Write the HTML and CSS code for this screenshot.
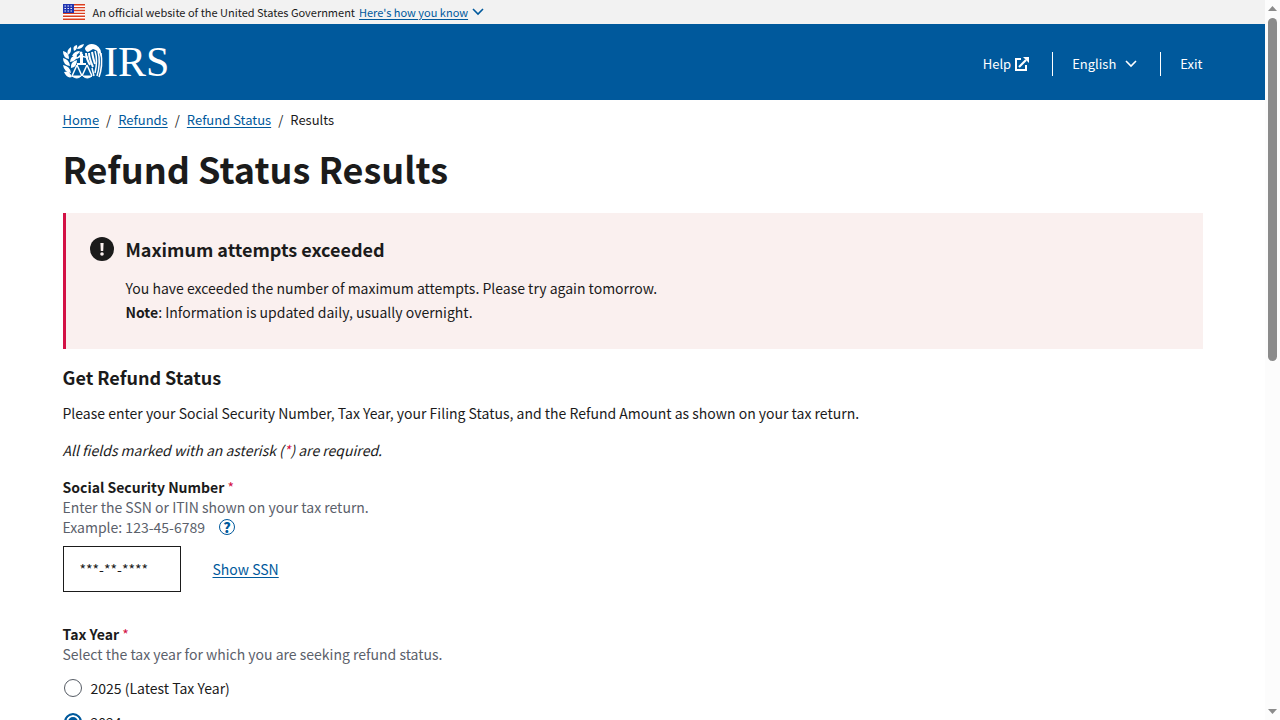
FILE: index.html
```html
<!DOCTYPE html>
<html lang="en">

<head>
    <meta charset="UTF-8">
    <meta name="viewport" content="width=device-width, initial-scale=1.0">
    <title>Refund Status Results</title>
    <link rel="stylesheet" href="styles.css">
</head>

<body>
    <div class="page">
        <div class="gov-banner">
            <div class="container gov-content">
                <svg class="flag" viewBox="0 0 22 16" aria-hidden="true">
                    <rect width="22" height="16" fill="#fff" />
                    <path d="M0 .7h22M0 3.600h22M0 6.500h22M0 9.400h22M0 12.300h22M0 15.300h22" stroke="#db3e1f" stroke-width="1.4" />
                    <rect width="11" height="9" fill="#1e33b1" />
                    <path d="M1.500 2h9M1.500 4.500h9M1.500 7h9" stroke="#fff" stroke-width="1.2" stroke-dasharray="1.4 1.6" />
                </svg>
                <span>An official website of the United States Government</span>
                <button class="banner-btn" type="button"><span>Here's how you know</span>
                    <svg class="chevron" viewBox="0 0 12 8" aria-hidden="true"><path d="M1 1l5 5 5-5" stroke-width="1.6" /></svg>
                </button>
            </div>
        </div>

        <header class="header">
            <div class="container header-content">
                <a class="logo" href="#" aria-label="IRS home">
                    <svg viewBox="0 -7 110 50" aria-hidden="true">
                        <g fill="#fff">
                            <!-- olive branch -->
                            <path d="M0 7q6 1 6 8Q0 14 0 7zM0 14q6 1 7 8Q0 21 0 14zM0 21q7 1 8 8Q1 28 0 21zM1 28q6-1 8 5Q4 35 1 28z" />
                            <path d="M5 11Q3 6 8 3q1 5-3 8zM11 7Q9 2 14 1q1 4-3 6zM14 5q1-4 7-5-1 5-7 5zM9 12q2-5 8-5-2 5-8 5zM7 18q0-6 7-7 0 6-7 7zM8 24q-1-6 6-8 0 7-6 8z" />
                            <!-- eagle head -->
                            <path d="M22 4q4-6 11-3 6 3 5 12-2-7-8-8l-5 3q-3-1-3-4z" />
                            <circle cx="18" cy="9" r="1.500" />
                            <path d="M17 10h3v10h-3zM14 19h9v2h-9z" />
                        </g>
                        <g fill="none" stroke="#fff" stroke-width="1.500">
                            <!-- scales -->
                            <path d="M12 14q4 0 6-3 3 3 7 2M14 21L9 32M14 21l5 11M24 21l-5 11M24 21l5 11" />
                            <path d="M9 32h9q-4 4-9 0zM20 32h9q-5 4-9 0z" fill="#fff" stroke-width="1" />
                            <!-- wing -->
                            <path d="M23 9q0 5 4 12M26 9q0 5 4 14M29 8q1 6 3 12" stroke-width="2" />
                            <path d="M32 7q3 9 0 22M35 7q3 12-1 25M38 9q2 13-2 24M29 24l2 8" />
                        </g>
                        <text class="logo-text" x="41" y="32">IRS</text>
                    </svg>
                </a>
                <nav class="nav">
                    <a class="nav-item" href="#">Help
                        <svg class="external" viewBox="0 0 14 14" aria-hidden="true">
                            <path d="M6 2H1v11h10V8" fill="none" stroke="#fff" stroke-width="2" />
                            <path d="M4 10l7-7" stroke="#fff" stroke-width="2.2" />
                            <path d="M8 0h6v6z" fill="#fff" />
                        </svg>
                    </a>
                    <button class="nav-item" type="button">English
                        <svg class="chevron" viewBox="0 0 12 8" aria-hidden="true"><path d="M1 1l5 5 5-5" stroke-width="1.6" /></svg>
                    </button>
                    <a class="nav-item" href="#">Exit</a>
                </nav>
            </div>
        </header>

        <main class="container">
            <nav class="breadcrumb" aria-label="Breadcrumb">
                <a href="#">Home</a><span>/</span><a href="#">Refunds</a><span>/</span><a href="#">Refund Status</a><span>/</span>Results
            </nav>

            <h1 class="title">Refund Status Results</h1>

            <div class="alert" role="alert">
                <svg class="alert-icon" viewBox="0 0 24 24" aria-hidden="true">
                    <circle cx="12" cy="12" r="12" fill="#1b1b1b" />
                    <path d="M10.400 6h3.200l-.4 8h-2.400z" fill="#faf0ef" />
                    <circle cx="12" cy="17" r="1.800" fill="#faf0ef" />
                </svg>
                <div>
                    <h2 class="sub-title">Maximum attempts exceeded</h2>
                    <p>You have exceeded the number of maximum attempts. Please try again tomorrow.</p>
                    <p><strong>Note</strong>: Information is updated daily, usually overnight.</p>
                </div>
            </div>

            <h2 class="sub-title">Get Refund Status</h2>
            <p class="intro">Please enter your Social Security Number, Tax Year, your Filing Status, and the Refund Amount as shown on your tax return.</p>
            <p class="intro"><em>All fields marked with an asterisk (<span class="required">*</span>) are required.</em></p>

            <form class="refund-form">
                <div class="field">
                    <label class="label" for="ssn">Social Security Number <span class="required">*</span></label>
                    <div class="hint">Enter the SSN or ITIN shown on your tax return.</div>
                    <div class="hint example">Example: 123-45-6789
                        <button class="help-btn" type="button" aria-label="SSN help">?</button>
                    </div>
                    <div class="ssn-row">
                        <input class="ssn-input" type="text" id="ssn" value="***-**-****">
                        <a href="#">Show SSN</a>
                    </div>
                </div>

                <fieldset class="field">
                    <legend class="label">Tax Year <span class="required">*</span></legend>
                    <div class="hint">Select the tax year for which you are seeking refund status.</div>
                    <div class="radio-row">
                        <input class="radio" type="radio" name="year" id="year2025">
                        <label for="year2025">2025 (Latest Tax Year)</label>
                    </div>
                    <div class="radio-row">
                        <input class="radio" type="radio" name="year" id="year2024" checked>
                        <label for="year2024">2024</label>
                    </div>
                </fieldset>
            </form>
        </main>
    </div>

    <div class="scrollbar" aria-hidden="true">
        <svg class="arrow" viewBox="0 0 9 5"><path d="M0 5l4.500-5L9 5z" /></svg>
        <div class="thumb"></div>
        <svg class="arrow" viewBox="0 0 9 5"><path d="M0 0h9L4.500 5z" /></svg>
    </div>
</body>

</html>
```
FILE: styles.css
```css
* {
    box-sizing: border-box;
    margin: 0;
    padding: 0;
}

body {
    display: flex;
    height: 100vh;
    overflow: hidden;
    color: #1b1b1b;
    font-family: "Noto Sans CJK SC", "Noto Sans", sans-serif;
    font-size: 14px;
    line-height: 24px;
}

button,
input {
    font: inherit;
    color: inherit;
}

button {
    border: none;
    background: none;
    cursor: pointer;
}

a {
    color: #00599c;
    text-underline-offset: 2px;
}

.page {
    flex: 1;
    overflow: hidden;
}

.container {
    max-width: 1140px;
    margin: 0 auto;
}

.gov-banner {
    background-color: #f2f2f2;
    font-size: 11px;
}

.gov-content {
    display: flex;
    align-items: center;
    gap: 8px;
}

.flag {
    width: 22px;
    height: 16px;
}

.banner-btn {
    display: flex;
    align-items: center;
    gap: 4px;
    margin-left: -4px;
    color: #00599c;
}

.banner-btn span {
    text-decoration: underline;
    text-underline-offset: 2px;
}

.chevron {
    width: 12px;
    height: 8px;
    fill: none;
    stroke: currentColor;
}

.header {
    background-color: #00599c;
    color: #fff;
    font-size: 13px;
}

.header-content {
    display: flex;
    align-items: center;
    justify-content: space-between;
    height: 76px;
}

.logo svg {
    display: block;
    width: 110px;
    height: 50px;
}

.logo-text {
    fill: #fff;
    font-family: "Liberation Serif", serif;
    font-size: 42px;
}

.nav {
    display: flex;
    padding-top: 4px;
}

.nav-item {
    display: flex;
    align-items: center;
    gap: 4px;
    padding: 0 23px 0 19px;
    color: #fff;
    text-decoration: none;
    border-right: 1px solid #fff;
}

button.nav-item {
    gap: 9px;
}

.nav-item:last-child {
    padding-right: 0;
    border: none;
}

.external {
    width: 14px;
    height: 14px;
}

.breadcrumb {
    padding-top: 8px;
    font-size: 13px;
}

.breadcrumb span {
    margin: 0 7px;
}

.title {
    margin: 12px 0 21px;
    font-size: 36px;
    line-height: 48px;
}

.alert {
    display: flex;
    gap: 12px;
    padding: 24px 24px 25px;
    margin-bottom: 16px;
    background-color: #faf0ef;
    border-left: 3px solid #d31145;
}

.alert-icon {
    width: 24px;
    height: 24px;
}

.sub-title {
    margin-bottom: 12px;
    font-size: 18px;
    line-height: 24px;
}

.alert .sub-title {
    margin-bottom: 15px;
}

.intro {
    margin-bottom: 13px;
}

.required {
    color: #d31145;
}

.refund-form {
    margin-top: 15px;
}

.field {
    margin-bottom: 32px;
    border: none;
    line-height: 20px;
}

.label {
    display: block;
    font-weight: bold;
}

.label .required {
    font-weight: normal;
}

.hint {
    color: #5b616b;
}

.example {
    display: flex;
    align-items: center;
    gap: 14px;
}

.help-btn {
    width: 16px;
    height: 16px;
    color: #00599c;
    font-weight: 900;
    font-size: 14px;
    line-height: 14px;
    border: 1px solid #00599c;
    border-radius: 50%;
}

.ssn-row {
    display: flex;
    align-items: center;
    gap: 32px;
    margin-top: 9px;
}

.ssn-input {
    width: 118px;
    height: 46px;
    padding: 0 16px;
    border: 1px solid #1b1b1b;
}

.radio-row {
    display: flex;
    align-items: center;
    gap: 9px;
    margin: 14px 0;
}

.radio {
    appearance: none;
    width: 18px;
    height: 18px;
    margin-left: 1px;
    background-color: #fff;
    border: 1px solid #565c65;
    border-radius: 50%;
}

.radio:checked {
    background-color: #00599c;
    border: 2px solid #00599c;
    box-shadow: inset 0 0 0 2px #fff;
}

.scrollbar {
    display: flex;
    flex-direction: column;
    align-items: center;
    width: 15px;
    padding: 6px 0;
    background-color: #fcfcfc;
}

.arrow {
    width: 9px;
    height: 5px;
    fill: #8b8b8b;
}

.thumb {
    width: 9px;
    height: 343px;
    margin: 7px 0 auto;
    background-color: #8b8b8b;
    border-radius: 5px;
}
```
